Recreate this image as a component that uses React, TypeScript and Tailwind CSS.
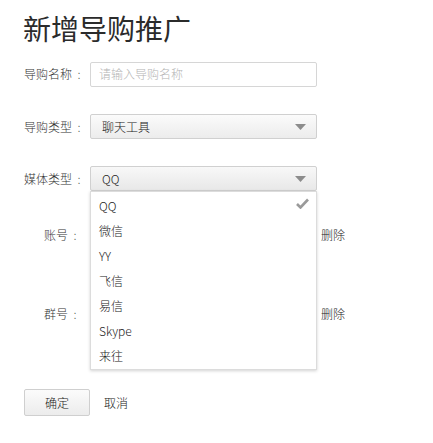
import React from "react";

const options = ["QQ", "微信", "YY", "飞信", "易信", "Skype", "来往"];

function Arrow() {
  return (
    <svg width="11" height="6" viewBox="0 0 11 6" className="absolute right-[10px] top-1/2 -translate-y-1/2">
      <path d="M0 0 L11 0 L5.5 6 Z" fill="#8c8c8c" />
    </svg>
  );
}

function Check() {
  return (
    <svg width="13" height="11" viewBox="0 0 13 11" className="absolute right-[7px] top-[5px]">
      <path d="M1 6 L4.5 9.5 L12 1.5" stroke="#9a9a9a" strokeWidth="2.6" fill="none" />
    </svg>
  );
}

// centred full-width colon, like the reference's YaHei
function Colon() {
  return <span className="inline-block w-[14px] text-center">:</span>;
}

export default function App() {
  return (
    <div
      className="w-[433px] h-[443px] bg-white text-[#222] overflow-hidden font-light"
      style={{ fontFamily: '"Microsoft YaHei", "Noto Sans CJK SC", sans-serif' }}
    >
      <h1 className="pl-[23px] pt-[10px] text-[28px] leading-[36px] font-normal text-[#2b2b2b]">新增导购推广</h1>

      {/* 导购名称 */}
      <div className="flex items-center mt-[16px] h-[24px]">
        <label className="w-[90px] pl-[24px] text-[12px] text-[#333]">导购名称<Colon /></label>
        <div className="w-[227px] h-[25px] border border-[#d6d6d6] rounded-[2px] flex items-center pl-[8px] text-[12px] text-[#b4b4b4]">
          请输入导购名称
        </div>
      </div>

      {/* 导购类型 */}
      <div className="flex items-center mt-[28px] h-[25px]">
        <label className="w-[90px] pl-[24px] text-[12px] text-[#333]">导购类型<Colon /></label>
        <div className="relative w-[227px] h-[25px] border border-[#d0d0d0] rounded-[2px] bg-gradient-to-b from-[#fbfbfb] to-[#ececec] flex items-center pl-[11px] text-[12px] text-[#222]">
          聊天工具
          <Arrow />
        </div>
      </div>

      {/* 媒体类型 */}
      <div className="flex items-center mt-[27px] h-[25px]">
        <label className="w-[90px] pl-[24px] text-[12px] text-[#333]">媒体类型<Colon /></label>
        <div className="relative w-[227px] h-[25px] border border-[#d0d0d0] rounded-[2px] bg-gradient-to-b from-[#f8f8f8] to-[#e8e8e8] flex items-center pl-[11px] text-[12px] text-[#222]">
          QQ
          <Arrow />
          <ul className="absolute left-[-1px] top-[24px] w-[227px] bg-white border border-[#dcdcdc] shadow-[0_1px_3px_rgba(0,0,0,0.18)] pt-[1px] pb-[1px] z-10">
            {options.map((o, i) => (
              <li key={o} className="relative h-[25px] flex items-center pl-[8px] text-[12px] text-[#222]">
                {o}
                {i === 0 && <Check />}
              </li>
            ))}
          </ul>
        </div>
      </div>

      {/* 账号 */}
      <div className="flex items-center mt-[32px] h-[24px]">
        <label className="w-[90px] pr-[8px] text-right text-[12px] text-[#333]">账号<Colon /></label>
        <div className="w-[227px] h-[24px] border border-[#d6d6d6]" />
        <span className="ml-[4px] text-[12px] text-[#222]">删除</span>
      </div>

      {/* 群号 */}
      <div className="flex items-center mt-[55px] h-[24px]">
        <label className="w-[90px] pr-[8px] text-right text-[12px] text-[#333]">群号<Colon /></label>
        <div className="w-[227px] h-[24px] border border-[#d6d6d6]" />
        <span className="ml-[4px] text-[12px] text-[#222]">删除</span>
      </div>

      {/* buttons */}
      <div className="flex items-center mt-[63px] pl-[24px]">
        <button className="w-[66px] h-[27px] border border-[#cfcfcf] rounded-[2px] bg-gradient-to-b from-[#fbfbfb] to-[#ececec] text-[12px] text-[#222]">
          确定
        </button>
        <span className="ml-[14px] text-[12px] text-[#222]">取消</span>
      </div>
    </div>
  );
}
